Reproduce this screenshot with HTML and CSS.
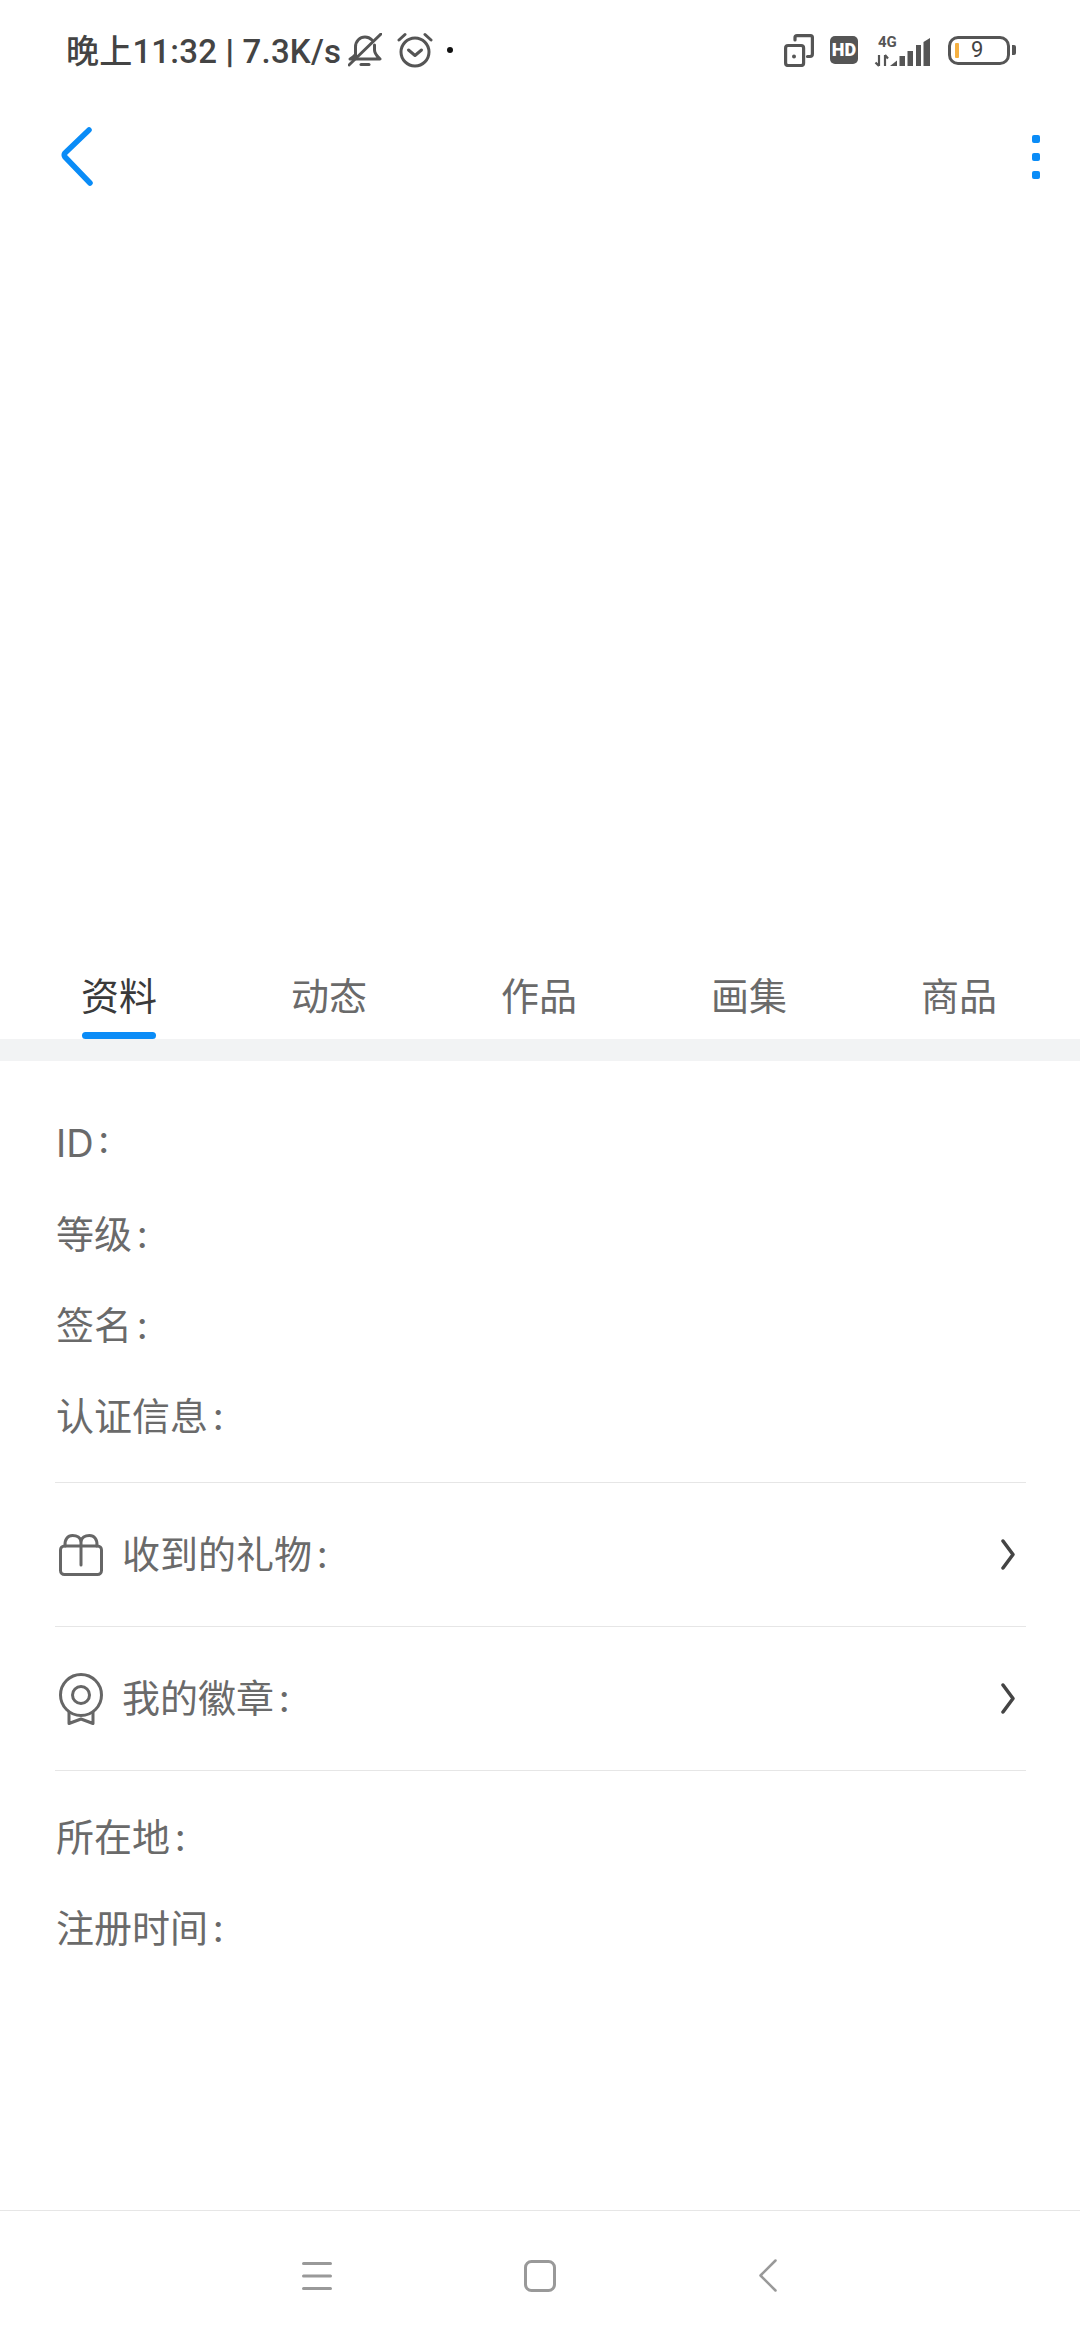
FILE: index.html
```html
<!DOCTYPE html>
<html lang="zh-CN">
<head>
<meta charset="UTF-8">
<meta name="viewport" content="width=device-width, initial-scale=1.0">
<title>资料</title>
<link rel="stylesheet" href="styles.css">
</head>
<body>
<div class="page">
  <div class="status-bar">
    <div class="status-left">
      <span class="status-text">晚上11:32 <b class="status-sep">|</b> 7.3K/s</span>
      <svg class="ic-bell" width="34" height="34" viewBox="0 0 34 34" fill="none" stroke="#555" stroke-width="3" stroke-linecap="round" stroke-linejoin="round">
        <path d="M7.500 23 V14 C7.500 8 12 4 17 4 C20 4 22 5 24 7"/>
        <path d="M26.500 12 V17 C26.500 21 29 23 32 26 H2 C4 25 6 24 7 22"/>
        <path d="M33 1 L1 32"/>
        <path d="M13 31.500 H21" stroke-width="3"/>
      </svg>
      <svg class="ic-alarm" width="36" height="36" viewBox="0 0 36 36" fill="none" stroke="#555" stroke-width="3" stroke-linecap="round" stroke-linejoin="round">
        <circle cx="18" cy="20" r="14"/>
        <path d="M11.500 18 L18 23.500 L24.500 18"/>
        <path d="M2 8 L8 2.500"/>
        <path d="M34 8 L28 2.500"/>
      </svg>
      <span class="status-dot"></span>
    </div>
    <div class="status-right">
      <svg class="ic-rotate" width="30" height="33" viewBox="0 0 30 33" fill="none" stroke="#555" stroke-width="3.200" stroke-linejoin="round" stroke-linecap="round">
        <rect x="1.600" y="11.500" width="18" height="20" rx="2.500"/>
        <path d="M11 6 V3.500 Q11 1.600 13 1.600 H26.500 Q28.400 1.600 28.400 3.500 V20 Q28.400 22.500 26 22.500 H23.500"/>
        <circle cx="10" cy="22.500" r="2" fill="#555" stroke="none"/>
      </svg>
      <span class="hd-badge">HD</span>
      <svg class="ic-signal" width="58" height="36" viewBox="0 -5 58 36">
        <text class="net-label" x="4" y="10">4G</text>
        <path d="M5 18 V29 M5 29 L1.500 25.500 M11 29 V18 M11 18 L14 21.500" fill="none" stroke="#555" stroke-width="2.200"/>
        <path d="M16 29 L23 23.500 V29 Z" fill="#555"/>
        <rect x="25.500" y="19" width="5.500" height="10" fill="#555"/>
        <rect x="33.500" y="14" width="5.500" height="15" fill="#555"/>
        <rect x="42" y="8" width="5" height="21" fill="#555"/>
        <path d="M49.500 5 L56 1 V29 H49.500 Z" fill="#555"/>
      </svg>
      <div class="battery">
        <div class="battery-body">
          <span class="battery-level"></span>
          <span class="battery-num">9</span>
        </div>
        <span class="battery-nub"></span>
      </div>
    </div>
  </div>

  <div class="top-nav">
    <svg width="32" height="60" viewBox="0 0 32 60" fill="none" stroke="#0a8cf7" stroke-width="5.500" stroke-linecap="round" stroke-linejoin="round">
      <path d="M28 3 L4 26 Q2.500 28 4 30 L29 56"/>
    </svg>
    <div class="more">
      <span></span>
      <span></span>
      <span></span>
    </div>
  </div>

  <div class="hero"></div>

  <div class="tabs">
    <div class="tab active"><span>资料</span></div>
    <div class="tab"><span>动态</span></div>
    <div class="tab"><span>作品</span></div>
    <div class="tab"><span>画集</span></div>
    <div class="tab"><span>商品</span></div>
  </div>
  <div class="band"></div>

  <div class="info">
    <div class="row">ID :</div>
    <div class="row">等级 :</div>
    <div class="row">签名 :</div>
    <div class="row">认证信息 :</div>
  </div>

  <div class="link-row">
    <svg class="link-icon" width="44" height="42" viewBox="0 0 44 42" fill="none" stroke="#666" stroke-width="3" stroke-linejoin="round" stroke-linecap="round">
      <rect x="1.500" y="12" width="41" height="28.500" rx="4"/>
      <path d="M22 31 V7 C21 3 17 1.500 13.500 1.500 C9 1.500 5.500 5 6 12"/>
      <path d="M22 7 C23 3 27 1.500 30.500 1.500 C35 1.500 38.500 5 38 12"/>
    </svg>
    <span class="link-label">收到的礼物 :</span>
    <svg class="chev" width="14" height="31" viewBox="0 0 14 31" fill="none" stroke="#444" stroke-width="3.500" stroke-linecap="round" stroke-linejoin="round">
      <path d="M2 2 L12 15.500 L2 29"/>
    </svg>
  </div>
  <div class="link-row">
    <svg class="link-icon" width="44" height="52" viewBox="0 0 44 52" fill="none" stroke="#666" stroke-width="3" stroke-linejoin="round">
      <circle cx="22" cy="22" r="20.500"/>
      <circle cx="22" cy="22" r="8.500"/>
      <path d="M10 39 V50.500 L22 46 L34 50.500 V39"/>
    </svg>
    <span class="link-label">我的徽章 :</span>
    <svg class="chev" width="14" height="31" viewBox="0 0 14 31" fill="none" stroke="#444" stroke-width="3.500" stroke-linecap="round" stroke-linejoin="round">
      <path d="M2 2 L12 15.500 L2 29"/>
    </svg>
  </div>

  <div class="info info-bottom">
    <div class="row">所在地 :</div>
    <div class="row">注册时间 :</div>
  </div>

  <div class="spacer"></div>

  <div class="nav-bar">
    <div class="nav-item">
      <svg width="30" height="28" viewBox="0 0 30 28" fill="none" stroke="#999" stroke-width="3" stroke-linecap="round">
        <path d="M1.500 1.500 H28.500 M1.500 14 H28.500 M1.500 26.500 H28.500"/>
      </svg>
    </div>
    <div class="nav-item">
      <svg width="32" height="32" viewBox="0 0 32 32" fill="none" stroke="#999" stroke-width="3">
        <rect x="1.500" y="1.500" width="29" height="29" rx="6"/>
      </svg>
    </div>
    <div class="nav-item">
      <svg width="18" height="33" viewBox="0 0 18 33" fill="none" stroke="#999" stroke-width="2.500" stroke-linecap="round" stroke-linejoin="round">
        <path d="M16.500 1.500 L1.500 16.500 L16.500 31.500"/>
      </svg>
    </div>
  </div>
</div>
</body>
</html>
```

FILE: styles.css
```css
body {
  margin: 0;
  background-color: #fff;
  color: #6a6a6a;
  font-family: Inter, "Noto Sans CJK SC", sans-serif;
}
.page {
  width: 1080px;
  height: 2340px;
  display: flex;
  flex-direction: column;
  overflow: hidden;
}
.status-bar {
  height: 100px;
  flex: none;
  display: flex;
  justify-content: space-between;
  align-items: center;
  padding: 0 64px 0 66px;
}
.status-left,
.status-right {
  display: flex;
  align-items: center;
}
.status-text {
  padding-bottom: 2px;
  font-family: Roboto, "Noto Sans CJK SC", sans-serif;
  font-size: 33px;
  font-weight: 500;
  letter-spacing: 0.2px;
  color: #444;
  white-space: nowrap;
}
.status-sep {
  font-weight: 900;
}
.ic-bell {
  margin-left: 7px;
}
.ic-alarm {
  margin-left: 15px;
}
.status-dot {
  width: 6px;
  height: 6px;
  margin-left: 14px;
  border-radius: 50%;
  background-color: #111;
}
.hd-badge {
  width: 28px;
  height: 28px;
  margin-left: 16px;
  border-radius: 5px;
  background-color: #555;
  color: #fff;
  font-family: Roboto, sans-serif;
  font-size: 18px;
  font-weight: 900;
  line-height: 28px;
  text-align: center;
}
.ic-signal {
  margin-left: 16px;
}
.net-label {
  font-family: Roboto, sans-serif;
  font-size: 15px;
  font-weight: 700;
  fill: #555;
}
.battery {
  display: flex;
  align-items: center;
  margin-left: 16px;
}
.battery-body {
  box-sizing: border-box;
  width: 62px;
  height: 29px;
  display: flex;
  align-items: center;
  padding-left: 4px;
  border: 3.500px solid #555;
  border-radius: 10px;
}
.battery-level {
  width: 4px;
  height: 15px;
  border-radius: 1px;
  background-color: #f5b041;
}
.battery-num {
  margin-left: 12px;
  font-family: Roboto, sans-serif;
  font-size: 22px;
  line-height: 1;
  color: #444;
}
.battery-nub {
  width: 4px;
  height: 10px;
  margin-left: 2px;
  border-radius: 0 2px 2px 0;
  background-color: #555;
}
.top-nav {
  height: 114px;
  flex: none;
  display: flex;
  justify-content: space-between;
  align-items: center;
  padding: 0 40px 0 61px;
}
.more {
  display: flex;
  flex-direction: column;
  gap: 10px;
}
.more span {
  width: 8px;
  height: 8px;
  border-radius: 2px;
  background-color: #0a8cf7;
}
.hero {
  height: 738px;
  flex: none;
}
.tabs {
  height: 87px;
  flex: none;
  display: flex;
  padding: 0 16px 0 14px;
}
.tab {
  width: 210px;
  display: flex;
  justify-content: center;
  font-size: 38px;
  line-height: 88px;
}
.tab span {
  position: relative;
  height: 87px;
}
.tab.active span {
  color: #3a3a3a;
}
.tab.active span::after {
  content: "";
  position: absolute;
  left: 1px;
  right: 1px;
  bottom: 0;
  height: 7px;
  border-radius: 4px;
  background-color: #0a8cf7;
}
.band {
  height: 22px;
  flex: none;
  background-color: #f2f3f4;
}
.info {
  flex: none;
  margin: 0 54px 0 55px;
  padding: 37px 0 20px 1px;
  border-bottom: 1px solid #e6e6e6;
}
.info-bottom {
  padding-top: 21px;
  padding-bottom: 0;
  border-bottom: none;
}
.row {
  height: 91px;
  font-size: 38px;
  line-height: 91px;
  word-spacing: -6px;
}
.link-row {
  box-sizing: border-box;
  height: 144px;
  flex: none;
  display: flex;
  align-items: center;
  margin: 0 54px 0 55px;
  padding-left: 4px;
  border-bottom: 1px solid #e6e6e6;
}
.link-icon {
  width: 44px;
  flex: none;
}
.link-label {
  margin-left: 19px;
  font-size: 38px;
  line-height: 91px;
  word-spacing: -6px;
}
.chev {
  margin-left: auto;
  margin-right: 11px;
}
.spacer {
  flex: 1;
}
.nav-bar {
  height: 129px;
  flex: none;
  display: grid;
  grid-template-columns: 222px 224px 232px;
  align-items: center;
  padding-left: 206px;
  border-top: 1px solid #e6e6e6;
}
.nav-item {
  display: flex;
  justify-content: center;
}
```
